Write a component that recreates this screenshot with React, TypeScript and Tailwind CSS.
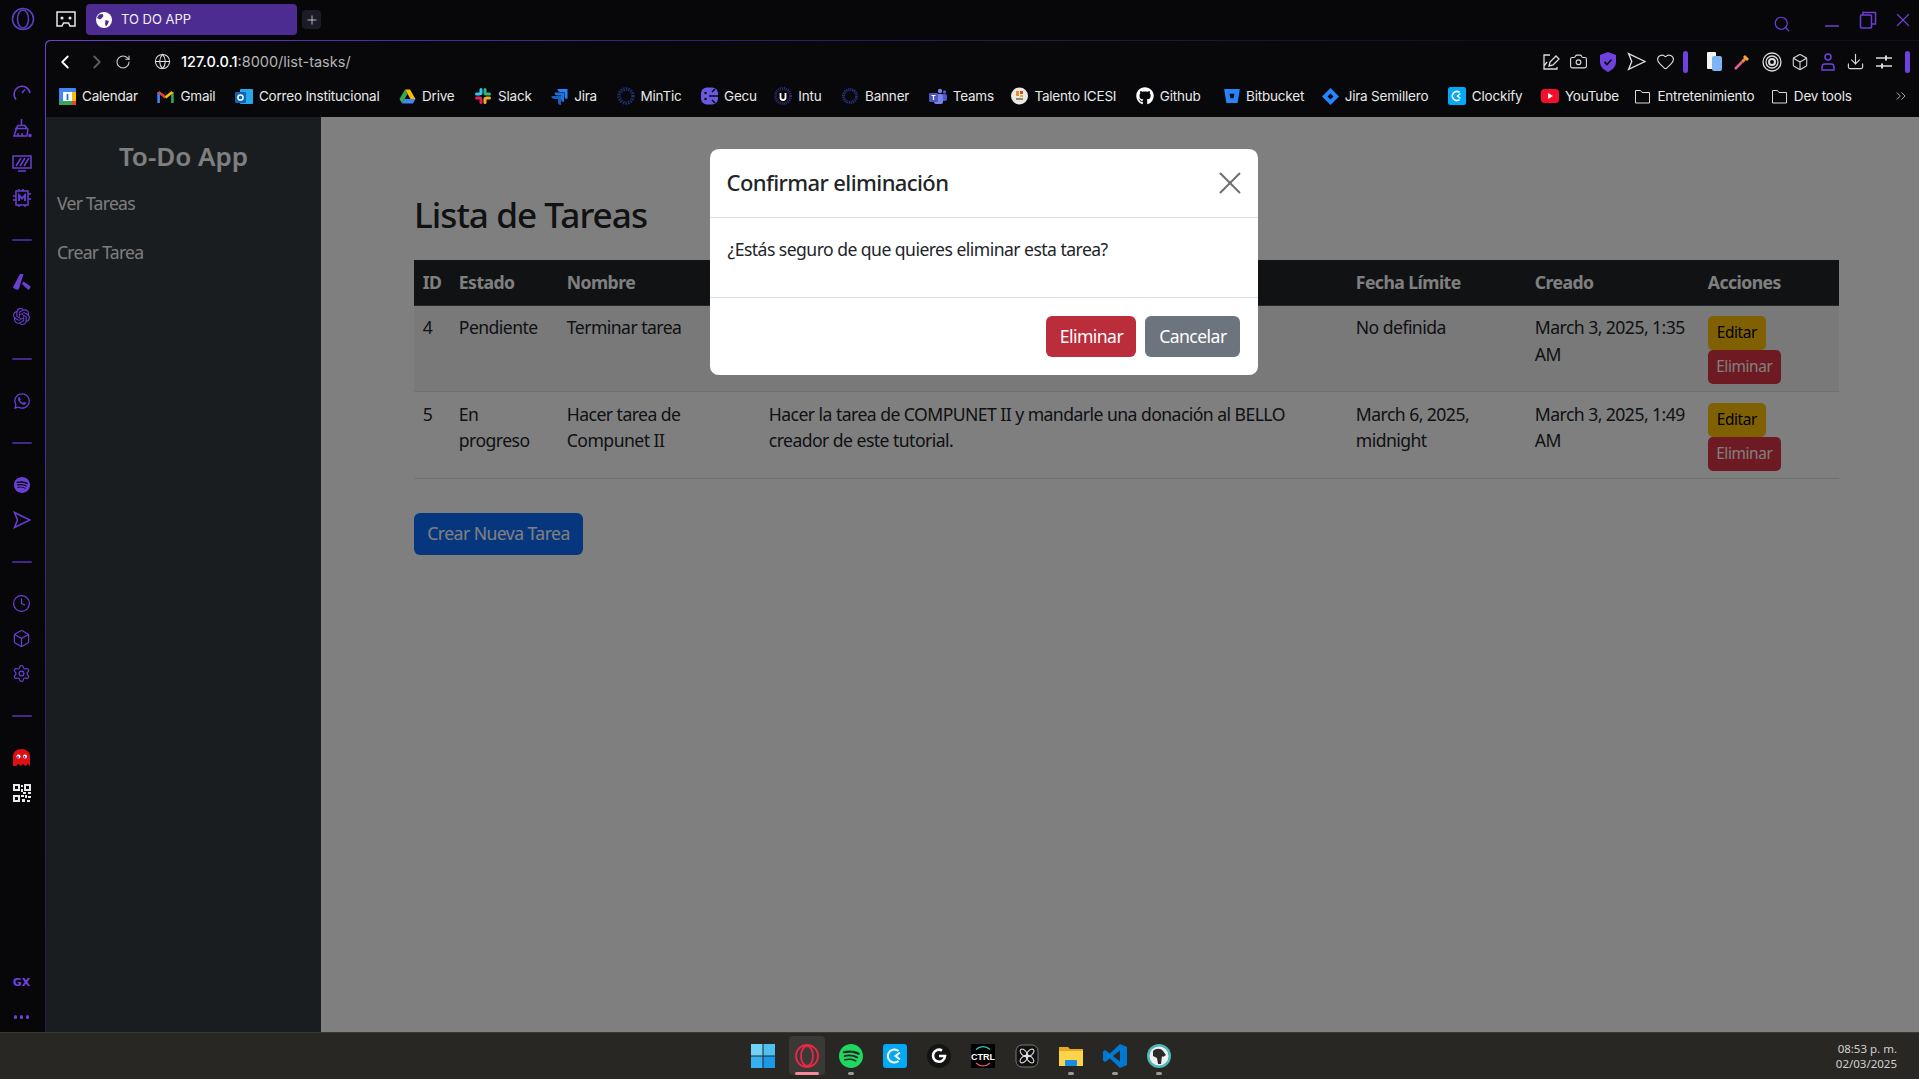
import { Box, Camera, ChevronLeft, ChevronRight, ChevronsRight, Clock, Download, Globe, Heart, Minus, Plus, RotateCw, Search, Settings, X } from "lucide-react";
import { FaBitbucket, FaGithub, FaWhatsapp } from "react-icons/fa";
import { SiOpenai, SiSpotify } from "react-icons/si";
import type { ReactNode } from "react";

const bs = "font-['Noto_Sans','Open_Sans',sans-serif]";

function Folder() {
    return (
        <svg width="17" height="17" viewBox="0 0 17 17" fill="none" stroke="#d8d8d8" strokeWidth="1">
            <path d="M1.5 15V2.5h5l1.5 2h7.5V15z" />
        </svg>
    );
}

const bookmarks: { name: string; shift?: string; icon: ReactNode }[] = [
    {
        name: "Calendar",
        icon: (
            <svg width="17" height="17" viewBox="0 0 17 17">
                <rect width="17" height="17" rx="1" fill="#4285f4" />
                <rect x="4" y="4" width="9" height="9" fill="#fff" />
                <rect x="0" y="13" width="13" height="4" fill="#34a853" />
                <rect x="13" y="13" width="4" height="4" fill="#ea4335" />
                <rect x="13" y="4" width="4" height="9" fill="#fbbc04" />
                <rect x="7.6" y="6" width="1.8" height="6" fill="#1a73e8" />
            </svg>
        ),
    },
    {
        name: "Gmail",
        icon: (
            <svg width="17" height="17" viewBox="0 0 17 17" fill="none" strokeWidth="2.6">
                <path d="M1.6 15V4" stroke="#4285f4" />
                <path d="M15.4 15V4" stroke="#34a853" />
                <path d="M1.6 4l6.9 5.4" stroke="#ea4335" />
                <path d="M15.4 4L8.5 9.4" stroke="#fbbc04" />
            </svg>
        ),
    },
    {
        name: "Correo Institucional",
        icon: (
            <svg width="18" height="17" viewBox="0 0 18 17">
                <rect x="5" y="1" width="13" height="15" rx="1" fill="#28a8ea" />
                <rect x="0" y="4" width="11" height="11" rx="1" fill="#0f62b5" />
                <circle cx="5.5" cy="9.5" r="2.6" fill="none" stroke="#fff" strokeWidth="1.5" />
            </svg>
        ),
    },
    {
        name: "Drive",
        icon: (
            <svg width="17" height="17" viewBox="0 0 17 17">
                <path d="M6 1.5h5l5.5 9.5h-5z" fill="#fbbc04" />
                <path d="M6 1.5L.5 11 3 15.5 8.5 6z" fill="#34a853" />
                <path d="M3 15.5h11l2.500-4.500H5.500z" fill="#4285f4" />
            </svg>
        ),
    },
    {
        name: "Slack",
        icon: (
            <svg width="18" height="18" viewBox="0 0 18 18" strokeWidth="3" strokeLinecap="round" fill="none">
                <path d="M7 2.500v4M2.500 7h3" stroke="#36c5f0" />
                <path d="M15.500 7h-4M11 2.500v4" stroke="#2eb67d" />
                <path d="M11 15.500v-4M15.500 11h-3" stroke="#ecb22e" />
                <path d="M2.500 11h4M7 15.500v-3" stroke="#e01e5a" />
            </svg>
        ),
    },
    {
        name: "Jira",
        icon: (
            <svg width="17" height="17" viewBox="0 0 17 17" fill="#2684ff">
                <path d="M6.500 1H16.500v10a3 3 0 0 1-3-3V4h-4a3 3 0 0 1-3-3z" />
                <path d="M3.500 4.500h9.500v9.500a3 3 0 0 1-3-3V7.500h-3.500a3 3 0 0 1-3-3z" opacity=".85" />
                <path d="M.5 8h9.500v9a3 3 0 0 1-3-3v-3H3.500a3 3 0 0 1-3-3z" opacity=".7" />
            </svg>
        ),
    },
    {
        name: "MinTic",
        icon: (
            <svg width="18" height="18" viewBox="0 0 18 18" fill="none" stroke="#1c2f6e">
                <circle cx="9" cy="9" r="7" strokeWidth="3.600" strokeDasharray="1.500 1" />
            </svg>
        ),
    },
    {
        name: "Gecu",
        icon: (
            <svg width="17" height="18" viewBox="0 0 17 18">
                <rect y="0.500" width="17" height="17" rx="6" fill="#6a5ae0" />
                <path d="M8 9h9M11 5l3-3M11 13l3 3" stroke="#0a0a0d" strokeWidth="1.600" />
                <circle cx="4.500" cy="6" r="1.200" fill="#0a0a0d" />
                <circle cx="4.500" cy="12" r="1.200" fill="#0a0a0d" />
            </svg>
        ),
    },
    {
        name: "Intu",
        shift: "-ml-[2px]",
        icon: (
            <svg width="18" height="18" viewBox="0 0 18 18" fill="none">
                <circle cx="9" cy="9" r="7.500" stroke="#2f2f7a" strokeWidth="3" strokeDasharray="1 1" />
                <path d="M6.500 6v4.500a2.500 2.500 0 0 0 5 0V6" stroke="#fff" strokeWidth="1.800" />
            </svg>
        ),
    },
    {
        name: "Banner",
        icon: (
            <svg width="18" height="18" viewBox="0 0 18 18" fill="none">
                <circle cx="9" cy="9" r="6.500" stroke="#2b2f80" strokeWidth="3" strokeDasharray="1.200 .8" />
            </svg>
        ),
    },
    {
        name: "Teams",
        icon: (
            <svg width="18" height="17" viewBox="0 0 18 17">
                <circle cx="11" cy="3" r="2.200" fill="#7b83eb" />
                <circle cx="15.500" cy="4" r="1.700" fill="#5059c9" />
                <rect x="12" y="6" width="6" height="7" rx="2" fill="#5059c9" />
                <rect x="5" y="6" width="9" height="10" rx="2" fill="#7b83eb" />
                <rect x="0" y="5" width="9" height="9" rx="1" fill="#4b53bc" />
                <path d="M2.500 7.500h4M4.500 7.500V12" stroke="#fff" strokeWidth="1.200" />
            </svg>
        ),
    },
    {
        name: "Talento ICESI",
        shift: "-ml-[2px]",
        icon: (
            <svg width="17" height="18" viewBox="0 0 17 18">
                <circle cx="8.500" cy="9" r="8.500" fill="#ece8e2" />
                <rect x="5" y="4" width="3" height="5" fill="#e8912c" />
                <rect x="9" y="4" width="3" height="3" fill="#d8453a" />
                <rect x="9" y="8" width="3" height="2" fill="#e8b32c" />
                <rect x="5" y="11" width="7" height="2" fill="#8a8a8a" />
            </svg>
        ),
    },
    { name: "Github", icon: <FaGithub className="w-[18px] h-[18px] text-white" /> },
    { name: "Bitbucket", shift: "ml-[4px]", icon: <FaBitbucket className="w-[16px] h-[16px] text-[#2684ff]" /> },
    {
        name: "Jira Semillero",
        shift: "-ml-[2px]",
        icon: (
            <svg width="17" height="17" viewBox="0 0 17 17">
                <path d="M8.500 0l8.500 8.500-8.500 8.500L0 8.500z" fill="#2684ff" />
                <path d="M8.500 5.500l3 3-3 3-3-3z" fill="#0a0a0d" />
            </svg>
        ),
    },
    {
        name: "Clockify",
        icon: (
            <svg width="18" height="18" viewBox="0 0 18 18" fill="none">
                <rect width="18" height="18" rx="2.500" fill="#03a9f4" />
                <path d="M11.500 5.300A4.500 4.500 0 1 0 11.500 12.700" stroke="#fff" strokeWidth="1.600" />
                <path d="M12.500 6.500L9.500 9l3 2.500" stroke="#fff" strokeWidth="1.400" />
            </svg>
        ),
    },
    {
        name: "YouTube",
        shift: "-ml-[1px]",
        icon: (
            <svg width="18" height="14" viewBox="0 0 18 14">
                <rect width="18" height="14" rx="3.500" fill="#f40f2c" />
                <path d="M7 4l5 3-5 3z" fill="#fff" />
            </svg>
        ),
    },
    { name: "Entretenimiento", shift: "-ml-[4px]", icon: <Folder /> },
    { name: "Dev tools", shift: "-ml-[3px]", icon: <Folder /> },
];

function RailCell({ children }: { children: ReactNode }) {
    return <div className="h-[35px] w-full pr-[2px] flex items-center justify-center text-[#6b3fd6]">{children}</div>;
}

function RailDivider() {
    return (
        <div className="h-[49px] w-full pr-[2px] flex items-center justify-center">
            <div className="w-[20px] h-[2px] bg-[#42288a] rounded-full"></div>
        </div>
    );
}

function Rail() {
    return (
        <div className="w-[45px] shrink-0 flex flex-col pt-[35px] bg-[#07070a]">
            <RailCell>
                <svg width="20" height="20" viewBox="0 0 20 20" fill="none" stroke="currentColor" strokeWidth="1.500">
                    <path d="M4 16.500A8 8 0 1 1 18 10" />
                    <path d="M10 10l3-3.500" />
                </svg>
            </RailCell>
            <RailCell>
                <svg width="20" height="20" viewBox="0 0 20 20" fill="none" stroke="currentColor" strokeWidth="1.500">
                    <path d="M9.500 1v6M6 7.500h7l2 3H4zM4.500 10.500L2 18h13l1-7.500M6 18v-3M10 18v-3" />
                    <circle cx="18" cy="17.500" r="1" fill="currentColor" />
                </svg>
            </RailCell>
            <RailCell>
                <svg width="20" height="20" viewBox="0 0 20 20" fill="none" stroke="currentColor" strokeWidth="1.500">
                    <rect x="1" y="3" width="18" height="12" />
                    <path d="M4 13l5-8M8 13l5-8M12 13l5-8M6 18h8" />
                </svg>
            </RailCell>
            <RailCell>
                <svg width="20" height="20" viewBox="0 0 20 20" fill="none" stroke="currentColor" strokeWidth="1.500">
                    <path d="M4 3h12v14H4zM7 1v2M11 1v2M1 8h3M1 12h3M16 6h3M16 11h3M7 17v2M13 17v2" />
                    <path d="M7 13V7l3 3.500L13 7v6" strokeWidth="1.800" />
                </svg>
            </RailCell>
            <RailDivider />
            <RailCell>
                <svg width="18" height="16" viewBox="0 0 18 16" fill="currentColor">
                    <path d="M7 0h3.500L6 14.500a2 2 0 0 1-2.500 1L1 14.500a1.500 1.500 0 0 1-.6-2z" />
                    <path d="M10.500 7.500L17 12a1.500 1.500 0 0 1 .3 1.500l-.8 1.500a1.200 1.200 0 0 1-1.800.3L9 10z" />
                </svg>
            </RailCell>
            <RailCell>
                <SiOpenai className="w-[17px] h-[17px]" />
            </RailCell>
            <RailDivider />
            <RailCell>
                <FaWhatsapp className="w-[18px] h-[18px]" />
            </RailCell>
            <RailDivider />
            <RailCell>
                <SiSpotify className="w-[16px] h-[16px]" />
            </RailCell>
            <RailCell>
                <svg width="18" height="18" viewBox="0 0 18 18" fill="none" stroke="currentColor" strokeWidth="1.500">
                    <path d="M1.500 1.500L17 9 1.500 16.500 4.500 9z" />
                </svg>
            </RailCell>
            <RailDivider />
            <RailCell>
                <Clock className="w-[19px] h-[19px]" strokeWidth={1.5} />
            </RailCell>
            <RailCell>
                <Box className="w-[19px] h-[19px]" strokeWidth={1.5} />
            </RailCell>
            <RailCell>
                <Settings className="w-[19px] h-[19px]" strokeWidth={1.5} />
            </RailCell>
            <RailDivider />
            <RailCell>
                <svg width="17" height="17" viewBox="0 0 17 17">
                    <path d="M0 17V7a8.500 7 0 0 1 17 0v10l-2-2-2.500 2-2.500-2-2 2-2.500-2-2.500 2z" fill="#e01010" />
                    <circle cx="5.500" cy="7.500" r="2" fill="#fff" />
                    <circle cx="12" cy="7.500" r="2" fill="#fff" />
                    <circle cx="5" cy="8" r="1" fill="#1f3bff" />
                    <circle cx="11.500" cy="8" r="1" fill="#1f3bff" />
                </svg>
            </RailCell>
            <RailCell>
                <svg width="18" height="18" viewBox="0 0 18 18" fill="#e8e8e8">
                    <path d="M0 0h7v7H0zm2 2v3h3V2zM11 0h7v7h-7zm2 2v3h3V2zM0 11h7v7H0zm2 2v3h3v-3z" fillRule="evenodd" />
                    <path d="M8 1h2v2H8zM8 5h2v3H8zM10 8h3v2h-3zM15 8h3v2h-3zM8 11h3v2H8zM12 11h2v3h-2zM15 12h3v2h-3zM9 15h3v3H9zM14 16h3v2h-3z" />
                </svg>
            </RailCell>
            <div className="mt-auto h-[36px] pb-[2px] pr-[2px] w-full flex items-center justify-center font-['DejaVu_Sans',sans-serif] text-[11px] font-bold text-[#6f42e0]">
                GX
            </div>
            <div className="h-[30px] pr-[2px] w-full flex items-center justify-center gap-[2.500px]">
                <div className="w-[3.500px] h-[3.500px] rounded-full bg-[#6f42e0]"></div>
                <div className="w-[3.500px] h-[3.500px] rounded-full bg-[#6f42e0]"></div>
                <div className="w-[3.500px] h-[3.500px] rounded-full bg-[#6f42e0]"></div>
            </div>
        </div>
    );
}

function TabStrip() {
    return (
        <div className="h-10 flex items-start shrink-0 bg-[#07070a]">
            <div className="w-[45px] h-[38px] flex items-center justify-center">
                <svg width="24" height="24" viewBox="0 0 24 24" fill="none" stroke="#5b3dc0" strokeWidth="1.600">
                    <circle cx="12" cy="12" r="10.500" />
                    <ellipse cx="12" cy="12" rx="5.500" ry="9" />
                </svg>
            </div>
            <div className="w-[41px] h-[38px] flex items-center justify-center pl-[1px]">
                <svg width="20" height="18" viewBox="0 0 20 18" fill="none" stroke="#e8e8e8" strokeWidth="1.500">
                    <path d="M1 2h18v14h-5l-1.500-3h-5L6 16H1z" />
                    <circle cx="6" cy="8" r=".8" fill="#e8e8e8" />
                    <circle cx="14" cy="8" r=".8" fill="#e8e8e8" />
                </svg>
            </div>
            <div className="mt-[4px] w-[211px] h-[31px] rounded-[4px] bg-[#4d2c91] flex items-center pl-[10px] gap-[9px] font-['Inter',sans-serif] text-[13px] text-[#f0f0f0]">
                <svg width="16" height="16" viewBox="0 0 16 16">
                    <circle cx="8" cy="8" r="8" fill="#fff" />
                    <path d="M3 2.500l3.500-.5 1 2-2 2.500-1.500 1L1 6zM9.500 8l3.500 1-1.500 3.500-1.500 2-1-2.500z" fill="#4d2c91" />
                </svg>
                <span>TO DO APP</span>
            </div>
            <div className="mt-[10px] ml-[5px] w-[19px] h-[19px] rounded-[4px] bg-[#1c1c26] flex items-center justify-center">
                <Plus className="w-[14px] h-[14px] text-[#cfcfcf]" strokeWidth={1.5} />
            </div>
            <div className="ml-auto flex items-center text-[#6b3fd6] mt-[11px] pr-[5px]">
                <Search className="w-[18px] h-[18px]" strokeWidth={1.6} />
                <Minus className="w-[22px] h-[22px] ml-[30px] mt-[4px]" strokeWidth={1.5} />
                <svg width="18" height="18" viewBox="0 0 18 18" fill="none" stroke="currentColor" strokeWidth="1.500" className="ml-[16px] -mt-[8px]">
                    <rect x="1.500" y="4" width="11" height="13" rx="1" />
                    <path d="M4 4V1.500h12.500V13H12.500" />
                </svg>
                <X className="w-[22px] h-[22px] ml-[15px] -mt-[8px]" strokeWidth={1.3} />
            </div>
        </div>
    );
}

function AddressRow() {
    return (
        <div className="h-[39px] flex items-center pt-[2px] shrink-0">
            <ChevronLeft className="w-[22px] h-[22px] text-white ml-[8px]" strokeWidth={2} />
            <ChevronRight className="w-[22px] h-[22px] text-[#5c5c5c] ml-[10px]" strokeWidth={2} />
            <RotateCw className="w-[16px] h-[16px] text-[#d0d0d0] ml-[7px]" strokeWidth={1.6} />
            <Globe className="w-[17px] h-[17px] text-[#e0e0e0] ml-[23px]" strokeWidth={1.5} />
            <div className="ml-[10px] font-['Inter',sans-serif] text-[14.500px] text-[#b4b4b4]">
                <span className="text-white font-medium">127.0.0.1</span>:8000/list-tasks/
            </div>
            <div className="ml-auto flex items-center pr-[9px] gap-[9.500px] text-[#dcdcdc]">
                <svg width="18" height="18" viewBox="0 0 18 18" fill="none" stroke="currentColor" strokeWidth="1.300" className="-translate-x-[4px]">
                    <path d="M8 2H2v14h13v-2M7 13l1-4 6-6 3 3-6 6zM2 13l3-4" />
                </svg>
                <Camera className="w-[19px] h-[19px] -translate-x-[4px]" strokeWidth={1.4} />
                <svg width="18" height="20" viewBox="0 0 18 20" className="-translate-x-[3px]">
                    <path d="M9 0l8 3v7c0 5-4 8-8 10-4-2-8-5-8-10V3z" fill="#6f42e0" />
                    <path d="M5.500 10l2.500 2.500 4.500-5" fill="none" stroke="#0a0a0d" strokeWidth="1.800" />
                </svg>
                <svg width="19" height="19" viewBox="0 0 18 18" fill="none" stroke="currentColor" strokeWidth="1.300" className="-translate-x-[2px]">
                    <path d="M1.500 1.500L17 9 1.500 16.500 4.500 9z" />
                </svg>
                <Heart className="w-[19px] h-[19px] -translate-x-[2px]" strokeWidth={1.4} />
                <div className="w-[5px] h-[22px] rounded-full bg-[#6f42e0] -ml-[3px] mr-[9px]"></div>
                <svg width="16" height="20" viewBox="0 0 16 20">
                    <rect x="0" y="0" width="9" height="17" rx="1" fill="#f4f4f4" />
                    <rect x="5" y="4" width="10" height="15" rx="2" fill="#7db4f5" />
                </svg>
                <svg width="18" height="18" viewBox="0 0 18 18" className="mx-[1px]">
                    <path d="M2 16l7-7" stroke="#e85a9a" strokeWidth="2.500" />
                    <path d="M9 9l4-4" stroke="#f08a2c" strokeWidth="3" />
                    <path d="M12 2l4 4-2 2-4-4z" fill="#f6a33a" />
                </svg>
                <svg width="20" height="20" viewBox="0 0 20 20" fill="none" stroke="currentColor" strokeWidth="1.300">
                    <circle cx="10" cy="10" r="9" />
                    <circle cx="10" cy="10" r="6" />
                    <circle cx="10" cy="10" r="3" strokeWidth="2" />
                </svg>
                <Box className="w-[18px] h-[18px]" strokeWidth={1.4} />
                <svg width="18" height="20" viewBox="0 0 18 20" fill="none" stroke="#6f42e0" strokeWidth="1.500">
                    <circle cx="9" cy="5" r="3" />
                    <path d="M3 18v-3a3 3 0 0 1 3-3h6a3 3 0 0 1 3 3v3z" />
                </svg>
                <Download className="w-[19px] h-[19px]" strokeWidth={1.4} />
                <svg width="18" height="18" viewBox="0 0 18 18" stroke="currentColor" strokeWidth="1.400">
                    <path d="M1 5h16M1 13h16" />
                    <path d="M11 2.500v5M7 10.500v5" strokeWidth="2" />
                </svg>
                <div className="w-[5px] h-[22px] rounded-full bg-[#6f42e0] ml-[3px]"></div>
            </div>
        </div>
    );
}

function BookmarkRow() {
    return (
        <div className="h-[37px] flex items-center pl-[13px] pb-[5px] gap-[19.500px] font-['Inter',sans-serif] text-[13.500px] tracking-[-0.2px] text-[#e8e8e8] shrink-0">
            {bookmarks.map((b) => (
                <div key={b.name} className={`flex items-center gap-[6px] whitespace-nowrap ${b.shift ?? ""}`}>
                    {b.icon}
                    <span>{b.name}</span>
                </div>
            ))}
            <ChevronsRight className="w-[16px] h-[16px] text-[#b8b8b8] ml-[22px]" strokeWidth={1.3} />
        </div>
    );
}

function Sidebar() {
    return (
        <aside className="w-[275px] shrink-0 bg-[#343a40] flex flex-col pt-[23px] text-white">
            <h4 className="text-[26px] leading-[32px] font-semibold text-center">To-Do App</h4>
            <a className="block mt-[7px] px-[11px] py-[11px] text-[17.600px] leading-[26.400px] text-[#f8f9fa] tracking-[-0.75px]">Ver Tareas</a>
            <a className="block mt-[1px] px-[11px] py-[11px] text-[17.600px] leading-[26.400px] text-[#f8f9fa] tracking-[-0.75px]">Crear Tarea</a>
        </aside>
    );
}

function ActionButtons() {
    return (
        <div className="flex flex-col items-start mt-[2px] -mb-[2px]">
            <button className="h-[34px] w-[58px] rounded-[5px] bg-[#ffc107] text-black text-[15.400px] tracking-[-0.4px]">Editar</button>
            <button className="h-[34px] w-[73px] rounded-[5px] bg-[#dc3545] text-white text-[15.400px] tracking-[-0.4px]">Eliminar</button>
        </div>
    );
}

const th = "px-[8.800px] h-[45px] text-left font-bold text-white border-b border-[#495057]";
const td = "px-[8.800px] pt-[8.800px] pb-[8.800px] align-top border-b border-[#dee2e6]";

function TaskTable() {
    return (
        <table className="w-full table-fixed border-collapse text-[17.600px] leading-[26.400px] text-[#212529] tracking-[-0.55px]">
            <colgroup>
                <col className="w-[36px]" />
                <col className="w-[108px]" />
                <col className="w-[202px]" />
                <col className="w-[587px]" />
                <col className="w-[179px]" />
                <col className="w-[173px]" />
                <col className="w-[140px]" />
            </colgroup>
            <thead>
                <tr className="bg-[#212529]">
                    <th className={th}>ID</th>
                    <th className={th}>Estado</th>
                    <th className={th}>Nombre</th>
                    <th className={th}>Descripción</th>
                    <th className={th}>Fecha Límite</th>
                    <th className={th}>Creado</th>
                    <th className={th}>Acciones</th>
                </tr>
            </thead>
            <tbody>
                <tr className="bg-[#f2f2f2]">
                    <td className={td}>4</td>
                    <td className={td}>Pendiente</td>
                    <td className={td}>Terminar tarea</td>
                    <td className={td}>Terminar la tarea</td>
                    <td className={td}>No definida</td>
                    <td className={td}>March 3, 2025, 1:35 AM</td>
                    <td className={td}>
                        <ActionButtons />
                    </td>
                </tr>
                <tr>
                    <td className={td}>5</td>
                    <td className={td}>En progreso</td>
                    <td className={td}>Hacer tarea de Compunet II</td>
                    <td className={td}>Hacer la tarea de COMPUNET II y mandarle una donación al BELLO creador de este tutorial.</td>
                    <td className={td}>March 6, 2025, midnight</td>
                    <td className={td}>March 3, 2025, 1:49 AM</td>
                    <td className={td}>
                        <ActionButtons />
                    </td>
                </tr>
            </tbody>
        </table>
    );
}

function ConfirmModal() {
    return (
        <div className="absolute inset-0 bg-black/50 flex justify-center items-start pt-[32px]">
            <div className="w-[548px] ml-[3px] bg-white rounded-[8.800px] text-[#212529] tracking-[-0.55px]">
                <div className="h-[69px] px-[17.600px] flex items-center justify-between border-b border-[#dee2e6]">
                    <h5 className="text-[22px] font-medium tracking-[-0.6px] -ml-[1px] -mt-[1px]">Confirmar eliminación</h5>
                    <X className="w-[38px] h-[38px] -mr-[9px] text-[#6f6f6f]" strokeWidth={1.2} />
                </div>
                <div className="px-[17.600px] pt-[17.600px] pb-[35.200px] text-[17.600px] leading-[26.400px]">¿Estás seguro de que quieres eliminar esta tarea?</div>
                <div className="px-[17.600px] py-[18px] flex justify-end gap-[9px] border-t border-[#dee2e6] text-[17.600px] text-white">
                    <button className="h-[41px] w-[90px] rounded-[6px] bg-[#bb2d3b]">Eliminar</button>
                    <button className="h-[41px] w-[95px] rounded-[6px] bg-[#6c757d]">Cancelar</button>
                </div>
            </div>
        </div>
    );
}

function Taskbar() {
    return (
        <div className="h-[47px] shrink-0 bg-[#282724] border-t border-[#3a3a38] flex items-center relative font-['Noto_Sans',sans-serif]">
            <div className="absolute inset-0 flex items-center justify-center pl-[2px] gap-[20px]">
                <svg width="24" height="24" viewBox="0 0 24 24">
                    <rect width="11.500" height="11.500" fill="#6fd3f7" />
                    <rect x="12.500" width="11.500" height="11.500" fill="#4fc0f2" />
                    <rect y="12.500" width="11.500" height="11.500" fill="#36b0ee" />
                    <rect x="12.500" y="12.500" width="11.500" height="11.500" fill="#1b98e8" />
                </svg>
                <div className="w-[24px] h-[24px] relative">
                    <div className="absolute -inset-x-[6px] -top-[8px] h-[39px] rounded-[4px] bg-[#3a3936]"></div>
                    <svg width="24" height="24" viewBox="0 0 24 24" fill="none" stroke="#e8274b" strokeWidth="1.800" className="relative">
                        <circle cx="12" cy="12" r="11" />
                        <ellipse cx="12" cy="12" rx="6" ry="10" />
                    </svg>
                    <div className="absolute left-[0px] top-[28px] w-[24px] h-[3px] rounded-full bg-[#f58a9c]"></div>
                </div>
                <div className="w-[24px] h-[24px] relative">
                    <SiSpotify className="w-[24px] h-[24px] text-[#1ed760]" />
                    <div className="absolute left-[9px] top-[28px] w-[6px] h-[3px] rounded-full bg-[#9a9a9a]"></div>
                </div>
                <svg width="24" height="24" viewBox="0 0 24 24" fill="none">
                    <rect width="24" height="24" rx="3" fill="#03a9f4" />
                    <path d="M15.500 7A6.500 6.500 0 1 0 15.500 17" stroke="#fff" strokeWidth="2" />
                    <path d="M17 8.500L12.500 12l4.500 3.500" stroke="#fff" strokeWidth="2" />
                </svg>
                <svg width="24" height="24" viewBox="0 0 24 24" fill="none">
                    <circle cx="12" cy="12" r="12" fill="#141414" />
                    <path d="M15 6.500A6 6 0 1 0 18 12h-6" stroke="#fff" strokeWidth="2.600" />
                </svg>
                <svg width="24" height="24" viewBox="0 0 24 24" fill="none">
                    <rect width="24" height="24" fill="#000" />
                    <path d="M5 5.500A10 10 0 0 1 19 5.500" stroke="#35c5b5" strokeWidth="1.300" />
                    <path d="M5 19A10 10 0 0 0 19 19" stroke="#e0507a" strokeWidth="1.300" />
                    <text x="12" y="16" textAnchor="middle" fontSize="9" fontWeight="700" fill="#fff" fontFamily="Liberation Sans, sans-serif">CTRL</text>
                </svg>
                <svg width="24" height="24" viewBox="0 0 24 24" fill="none">
                    <rect x="1" y="1" width="22" height="22" rx="6" fill="#111" stroke="#777" />
                    <g stroke="#ddd" strokeWidth="1.100">
                        <ellipse cx="12" cy="7.500" rx="2.500" ry="4.500" transform="rotate(45 12 12)" />
                        <ellipse cx="12" cy="7.500" rx="2.500" ry="4.500" transform="rotate(135 12 12)" />
                        <ellipse cx="12" cy="7.500" rx="2.500" ry="4.500" transform="rotate(225 12 12)" />
                        <ellipse cx="12" cy="7.500" rx="2.500" ry="4.500" transform="rotate(315 12 12)" />
                    </g>
                </svg>
                <div className="w-[24px] h-[24px] relative">
                    <svg width="24" height="24" viewBox="0 0 24 24">
                        <path d="M0 3h9l2 2h13v4H0z" fill="#e8a820" />
                        <rect y="7" width="24" height="15" fill="#fcd34d" />
                        <rect x="6" y="16" width="12" height="6" rx="1" fill="#1b8ce0" />
                    </svg>
                    <div className="absolute left-[9px] top-[28px] w-[6px] h-[3px] rounded-full bg-[#9a9a9a]"></div>
                </div>
                <div className="w-[24px] h-[24px] relative">
                    <svg width="24" height="24" viewBox="0 0 24 24">
                        <path d="M17 0l7 3v18l-7 3-10-9.500L2 18l-2-1.500V7.500L2 6l5 3.500z" fill="#0078d4" />
                        <path d="M17 6.500L10 12l7 5.500z" fill="#282724" />
                    </svg>
                    <div className="absolute left-[9px] top-[28px] w-[6px] h-[3px] rounded-full bg-[#9a9a9a]"></div>
                </div>
                <div className="w-[24px] h-[24px] relative">
                    <svg width="24" height="24" viewBox="0 0 24 24">
                        <circle cx="12" cy="12" r="12" fill="#4fb8b8" />
                        <circle cx="12" cy="12" r="9.500" fill="#f0f0f0" />
                        <path d="M6 7c3-3 8-3 10 0l3 4-3 2-1-1-1 8h-3l-1-6-4-2z" fill="#2a2a2a" />
                    </svg>
                    <div className="absolute left-[9px] top-[28px] w-[6px] h-[3px] rounded-full bg-[#9a9a9a]"></div>
                </div>
            </div>
            <div className="ml-auto pr-[22px] text-right text-[11.500px] leading-[15px] text-[#d0d0d0] relative">
                <div>08:53 p. m.</div>
                <div>02/03/2025</div>
            </div>
        </div>
    );
}

export default function App() {
    return (
        <div className={`w-screen h-screen flex flex-col overflow-hidden ${bs}`}>
            <div className="flex-1 min-h-0 flex flex-col bg-[#07070a]">
                <TabStrip />
                <div className="flex-1 min-h-0 flex">
                    <Rail />
                    <div className="flex-1 min-w-0 rounded-tl-[5px] pl-[1px] pt-[1px] bg-[linear-gradient(135deg,#6b3fd6_0%,#35206f_22%,#13101f_50%,#0b0b10_100%)]">
                        <div className="h-full flex flex-col rounded-tl-[5px] bg-[#08080b]">
                            <AddressRow />
                            <BookmarkRow />
                            <div className="flex-1 min-h-0 flex relative bg-white">
                                <Sidebar />
                                <main className="flex-1 min-w-0 pl-[93px] pr-[80px] pt-[76px]">
                                    <h1 className="text-[35.200px] leading-[42px] font-medium text-[#212529] mb-[25px] tracking-[-1px]">Lista de Tareas</h1>
                                    <TaskTable />
                                    <button className="mt-[34px] h-[42px] w-[169px] rounded-[6px] bg-[#0d6efd] text-white text-[17.600px] tracking-[-0.55px]">Crear Nueva Tarea</button>
                                </main>
                                <ConfirmModal />
                            </div>
                        </div>
                    </div>
                </div>
            </div>
            <Taskbar />
        </div>
    );
}
